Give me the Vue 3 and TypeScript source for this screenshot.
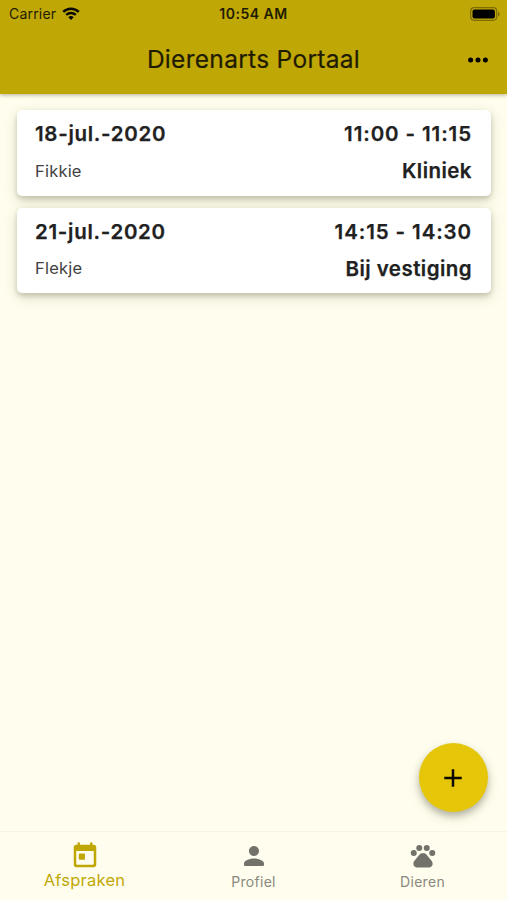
<script setup lang="ts">
interface Appointment {
  date: string
  time: string
  pet: string
  place: string
}
interface Tab {
  label: string
  icon: string
  active: boolean
}

const appointments: Appointment[] = [
  { date: '18-jul.-2020', time: '11:00 - 11:15', pet: 'Fikkie', place: 'Kliniek' },
  { date: '21-jul.-2020', time: '14:15 - 14:30', pet: 'Flekje', place: 'Bij vestiging' },
]

const tabs: Tab[] = [
  {
    label: 'Afspraken',
    active: true,
    icon: 'M19 3h-1V2a1 1 0 0 0-2 0v1H8V2a1 1 0 0 0-2 0v1H5c-1.11 0-2 .9-2 2v14c0 1.1.89 2 2 2h14c1.1 0 2-.9 2-2V5c0-1.1-.9-2-2-2zm0 15c0 .55-.45 1-1 1H6c-.55 0-1-.45-1-1V8h14v10zM8 10h3c.55 0 1 .45 1 1v3c0 .55-.45 1-1 1H8c-.55 0-1-.45-1-1v-3c0-.55.45-1 1-1z',
  },
  {
    label: 'Profiel',
    active: false,
    icon: 'M12 12c2.21 0 4-1.79 4-4s-1.79-4-4-4-4 1.79-4 4 1.79 4 4 4zm0 2c-2.67 0-8 1.34-8 4v1c0 .55.45 1 1 1h14c.55 0 1-.45 1-1v-1c0-2.66-5.33-4-8-4z',
  },
  {
    label: 'Dieren',
    active: false,
    icon: 'M4.6 7.200a2.400 2.400 0 1 0 0 4.800 2.400 2.400 0 0 0 0-4.800zM9 3.100a2.400 2.400 0 1 0 0 4.800 2.400 2.400 0 0 0 0-4.800zM15 3.100a2.400 2.400 0 1 0 0 4.800 2.400 2.400 0 0 0 0-4.800zM19.400 7.200a2.400 2.400 0 1 0 0 4.800 2.400 2.400 0 0 0 0-4.800zM17.640 14.300c-.87-1.02-1.700-2.100-2.580-3.120-.460-.540-1.050-1.080-1.750-1.320-.360-.120-.840-.130-1.310-.130s-.950.010-1.320.140c-.700.240-1.280.780-1.750 1.320-.870 1.020-1.700 2.090-2.580 3.110-1.310 1.310-2.320 2.560-2.020 4.590.290 1.020 1.020 2.030 2.330 2.320.730.150 2.860.02 5.340.02s4.610.130 5.340-.02c1.310-.290 2.040-1.310 2.330-2.320.310-2.040-.8-3.290-2.030-4.590z',
  },
]
</script>

<template>
  <div class="screen">
    <header class="top">
      <div class="status">
        <span class="carrier">Carrier</span>
        <svg class="wifi" viewBox="0 0 18 13" width="18" height="13">
          <path d="M1.200 4.900a11.200 11.200 0 0 1 15.600 0M4.200 7.900a7 7 0 0 1 9.600 0" />
          <path class="wedge" d="M9 13 6.300 10.200a3.900 3.900 0 0 1 5.400 0z" />
        </svg>
        <span class="clock">10:54 AM</span>
        <svg class="battery" viewBox="0 0 31 14" width="31" height="14">
          <rect class="shell" x=".7" y=".7" width="26" height="12.600" rx="3.500" />
          <rect x="2.500" y="2.500" width="22.400" height="9" rx="2" />
          <path class="cap" d="M28 4.700v4.600c1-.4 1.600-1.300 1.600-2.300S29 5.100 28 4.700z" />
        </svg>
      </div>
      <div class="bar">
        <h1>Dierenarts Portaal</h1>
        <svg class="more" viewBox="0 0 20 6" width="20" height="6">
          <circle cx="2.600" cy="3" r="2.500" />
          <circle cx="10" cy="3" r="2.500" />
          <circle cx="17.400" cy="3" r="2.500" />
        </svg>
      </div>
    </header>

    <main class="list">
      <article v-for="a in appointments" :key="a.date" class="card">
        <div class="row">
          <span class="date">{{ a.date }}</span>
          <span class="time">{{ a.time }}</span>
        </div>
        <div class="row">
          <span class="pet">{{ a.pet }}</span>
          <span class="place">{{ a.place }}</span>
        </div>
      </article>
    </main>

    <button class="fab" aria-label="Nieuwe afspraak">
      <svg viewBox="0 0 24 24" width="30" height="30">
        <path d="M12 5v14M5 12h14" />
      </svg>
    </button>

    <nav class="tabs">
      <div v-for="t in tabs" :key="t.label" class="tab" :class="{ active: t.active }">
        <svg viewBox="0 0 24 24" width="30" height="30"><path :d="t.icon" /></svg>
        <span>{{ t.label }}</span>
      </div>
    </nav>
  </div>
</template>

<style>
body {
  margin: 0;
  background: #fffded;
}
</style>

<style scoped>
.screen {
  position: relative;
  display: flex;
  flex-direction: column;
  box-sizing: border-box;
  width: 507px;
  height: 900px;
  overflow: hidden;
  background: #fffded;
  color: #212121;
  font-family: Inter, "Liberation Sans", sans-serif;
}
.top {
  flex: none;
  height: 94px;
  background: #bfa706;
  box-shadow: 0 1px 4px rgba(60, 55, 20, 0.4);
  color: #1f1b02;
}
.status {
  display: grid;
  grid-template-columns: auto auto 1fr auto;
  align-items: center;
  height: 27px;
  padding: 0 6px 0 9px;
  font-size: 14px;
}
.carrier {
  letter-spacing: 0.2px;
}
.wifi {
  margin-left: 6px;
  fill: none;
  stroke: #0b0a00;
  stroke-width: 2.5;
}
.wifi .wedge {
  fill: #0b0a00;
  stroke: none;
}
.clock {
  margin-left: 139px;
  font-weight: 600;
  letter-spacing: 0.5px;
}
.battery .shell {
  fill: none;
  stroke: #7d6d04;
  stroke-width: 1.2;
}
.battery .cap {
  fill: #7d6d04;
}
.bar {
  display: grid;
  grid-template-columns: 1fr auto 1fr;
  align-items: center;
  height: 65px;
}
h1 {
  grid-column: 2;
  margin: 0 0 1px;
  font-size: 24.5px;
  font-weight: 400;
  letter-spacing: 0.3px;
  -webkit-text-stroke: 0.2px currentColor;
}
.more {
  justify-self: end;
  margin-right: 19.5px;
}
.list {
  display: flex;
  flex: 1;
  flex-direction: column;
  gap: 12px;
  padding: 16px 16px 0 17px;
}
.card {
  display: flex;
  flex-direction: column;
  gap: 9px;
  box-sizing: border-box;
  height: 85.5px;
  padding: 9.5px 19px 0 18px;
  border-radius: 5px;
  background: #fff;
  box-shadow: 0 3px 5px rgba(60, 65, 30, 0.2), 0 4px 13px rgba(60, 65, 30, 0.18);
}
.row {
  display: flex;
  justify-content: space-between;
  align-items: center;
  height: 28px;
}
.date,
.time,
.place {
  font-size: 20.5px;
  font-weight: 600;
  -webkit-text-stroke: 0.25px currentColor;
}
.date {
  letter-spacing: 0.7px;
}
.time {
  letter-spacing: 0.9px;
}
.place {
  letter-spacing: 0.45px;
}
.pet {
  color: #424242;
  font-size: 16.5px;
  letter-spacing: 0.2px;
}
.fab {
  position: absolute;
  right: 19px;
  bottom: 88px;
  display: grid;
  place-items: center;
  width: 69px;
  height: 69px;
  padding: 0;
  border: 0;
  border-radius: 50%;
  background: #e5c608;
  box-shadow: 0 4px 6px rgba(60, 60, 40, 0.25), 0 5px 12px rgba(60, 60, 40, 0.18);
}
.fab svg {
  margin: 1px 1px 0 0;
}
.fab path {
  fill: none;
  stroke: #0d0b00;
  stroke-width: 2;
}
.tabs {
  display: grid;
  grid-template-columns: repeat(3, 1fr);
  flex: none;
  box-sizing: border-box;
  height: 69px;
  padding-top: 9px;
  border-top: 1px solid #f8f5e5;
}
.tab {
  display: flex;
  flex-direction: column;
  align-items: center;
  color: #8a897f;
  font-size: 14px;
  line-height: 21px;
  letter-spacing: 0.3px;
}
.tab svg {
  fill: #72726a;
}
.tab.active {
  color: #bfa706;
  font-size: 16.5px;
  line-height: 18px;
  letter-spacing: 0.25px;
}
.tab.active svg {
  fill: #bfa706;
}
</style>
